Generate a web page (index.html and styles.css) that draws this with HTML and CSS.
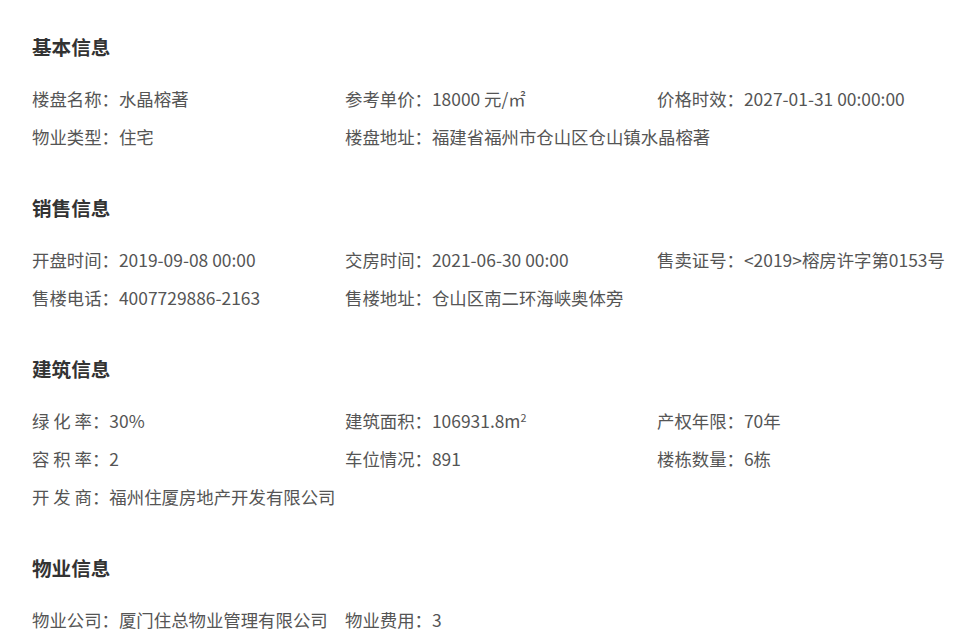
FILE: index.html
```html
<!DOCTYPE html>
<html lang="zh-CN">
<head>
<meta charset="utf-8">
<title>楼盘信息</title>
<link rel="stylesheet" href="styles.css">
</head>
<body>
<div class="page">
  <section class="sec">
    <h2 class="sec-title">基本信息</h2>
    <div class="grid">
      <div class="item"><span class="lbl">楼盘名称：</span><span class="val">水晶榕著</span></div>
      <div class="item"><span class="lbl">参考单价：</span><span class="val">18000 元/㎡</span></div>
      <div class="item"><span class="lbl">价格时效：</span><span class="val">2027-01-31 00:00:00</span></div>
      <div class="item"><span class="lbl">物业类型：</span><span class="val">住宅</span></div>
      <div class="item wide"><span class="lbl">楼盘地址：</span><span class="val">福建省福州市仓山区仓山镇水晶榕著</span></div>
    </div>
  </section>
  <section class="sec">
    <h2 class="sec-title">销售信息</h2>
    <div class="grid">
      <div class="item"><span class="lbl">开盘时间：</span><span class="val">2019-09-08 00:00</span></div>
      <div class="item"><span class="lbl">交房时间：</span><span class="val">2021-06-30 00:00</span></div>
      <div class="item"><span class="lbl">售卖证号：</span><span class="val">&lt;2019&gt;榕房许字第0153号</span></div>
      <div class="item"><span class="lbl">售楼电话：</span><span class="val">4007729886-2163</span></div>
      <div class="item"><span class="lbl">售楼地址：</span><span class="val">仓山区南二环海峡奥体旁</span></div>
    </div>
  </section>
  <section class="sec">
    <h2 class="sec-title">建筑信息</h2>
    <div class="grid">
      <div class="item"><span class="lbl">绿 化 率：</span><span class="val">30%</span></div>
      <div class="item"><span class="lbl">建筑面积：</span><span class="val">106931.8m<sup class="sq">2</sup></span></div>
      <div class="item"><span class="lbl">产权年限：</span><span class="val">70年</span></div>
      <div class="item"><span class="lbl">容 积 率：</span><span class="val">2</span></div>
      <div class="item"><span class="lbl">车位情况：</span><span class="val">891</span></div>
      <div class="item"><span class="lbl">楼栋数量：</span><span class="val">6栋</span></div>
      <div class="item wide"><span class="lbl">开 发 商：</span><span class="val">福州住厦房地产开发有限公司</span></div>
    </div>
  </section>
  <section class="sec">
    <h2 class="sec-title">物业信息</h2>
    <div class="grid">
      <div class="item"><span class="lbl">物业公司：</span><span class="val">厦门住总物业管理有限公司</span></div>
      <div class="item"><span class="lbl">物业费用：</span><span class="val">3</span></div>
    </div>
  </section>
</div>
</body>
</html>
```
FILE: styles.css
```css
html, body {
  margin: 0;
  padding: 0;
  background: #ffffff;
}
body {
  font-family: "Noto Sans CJK SC", "Noto Sans", sans-serif;
  color: #555555;
}
.page {
  padding: 33px 0 0 32px;
}
.sec {
  margin-bottom: 38px;
}
.sec-title {
  margin: 0 0 19px 0;
  font-size: 19.6px;
  line-height: 28px;
  font-weight: 700;
  color: #333333;
}
.grid {
  display: grid;
  grid-template-columns: 313px 312px 1fr;
}
.item {
  font-size: 17.4px;
  line-height: 38px;
  white-space: nowrap;
}
.item.wide {
  grid-column: span 2;
}
.lbl {
  color: #555555;
}
.val {
  color: #555555;
}
.sq {
  font-size: 0.62em;
  line-height: 0;
  vertical-align: 0.6em;
}
```
